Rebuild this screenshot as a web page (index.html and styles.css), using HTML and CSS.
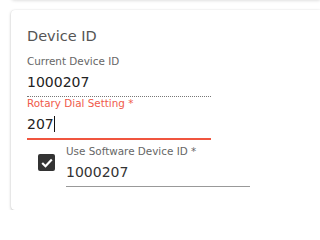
FILE: index.html
```html
<!DOCTYPE html>
<html>
<head>
<meta charset="utf-8">
<link rel="stylesheet" href="styles.css">
</head>
<body>
<div class="prev-card"></div>
<div class="card">
  <h2 class="title">Device ID</h2>
  <div class="field">
    <label class="label">Current Device ID</label>
    <div class="value dotted">1000207</div>
  </div>
  <div class="field">
    <label class="label error">Rotary Dial Setting *</label>
    <div class="value focused">207<span class="caret"></span></div>
  </div>
  <div class="check-row">
    <div class="checkbox">
      <svg width="12" height="10" viewBox="0 0 12 10"><path d="M1.2 5 L4.5 8.2 L10.8 1.6" fill="none" stroke="#fff" stroke-width="2.2"/></svg>
    </div>
    <div class="field sub">
      <label class="label">Use Software Device ID *</label>
      <div class="value solid">1000207</div>
    </div>
  </div>
</div>
</body>
</html>
```
FILE: styles.css
```css
html {
  overflow: hidden;
}
html, body {
  margin: 0;
  padding: 0;
  background: #fff;
}
body {
  font-family: "DejaVu Sans", Verdana, sans-serif;
}
.prev-card {
  height: 10px;
  margin-top: -10px;
  margin-left: 11px;
  background: #fff;
  box-shadow: 0 1px 3px rgba(0,0,0,0.12);
  border-radius: 0 0 0 4px;
}
.card {
  margin-top: 10px;
  margin-left: 11px;
  height: 200px;
  box-sizing: border-box;
  background: #fff;
  border-radius: 4px 0 0 4px;
  box-shadow: 0 1px 3px rgba(0,0,0,0.25), 0 0 1px rgba(0,0,0,0.1);
  padding: 16px 0 0 16px;
}
.title {
  margin: 0 0 9px 0;
  font-weight: normal;
  font-size: 14.5px;
  line-height: 20px;
  color: #555;
}
.field {
  display: flex;
  flex-direction: column;
  width: 184px;
}
.label {
  font-size: 10.4px;
  line-height: 12px;
  color: #666;
}
.label.error {
  color: #f05a4a;
}
.value {
  font-size: 14px;
  line-height: 18px;
  color: #222;
  padding: 6px 0 5px 0;
}
.dotted {
  border-bottom: 1px dotted #777;
}
.focused {
  border-bottom: 2px solid #f0553f;
  padding-bottom: 5px;
}
.caret {
  display: inline-block;
  width: 1px;
  height: 16px;
  background: #111;
  vertical-align: -3px;
}
.check-row {
  display: flex;
  align-items: flex-start;
  margin-top: 5px;
}
.checkbox {
  width: 17px;
  height: 17px;
  border-radius: 2px;
  background: #333;
  margin: 9px 0 0 11px;
  display: flex;
  align-items: center;
  justify-content: center;
}
.field.sub {
  margin-left: 11px;
}
.sub .value {
  color: #333;
}
.solid {
  border-bottom: 1px solid #999;
}
```
